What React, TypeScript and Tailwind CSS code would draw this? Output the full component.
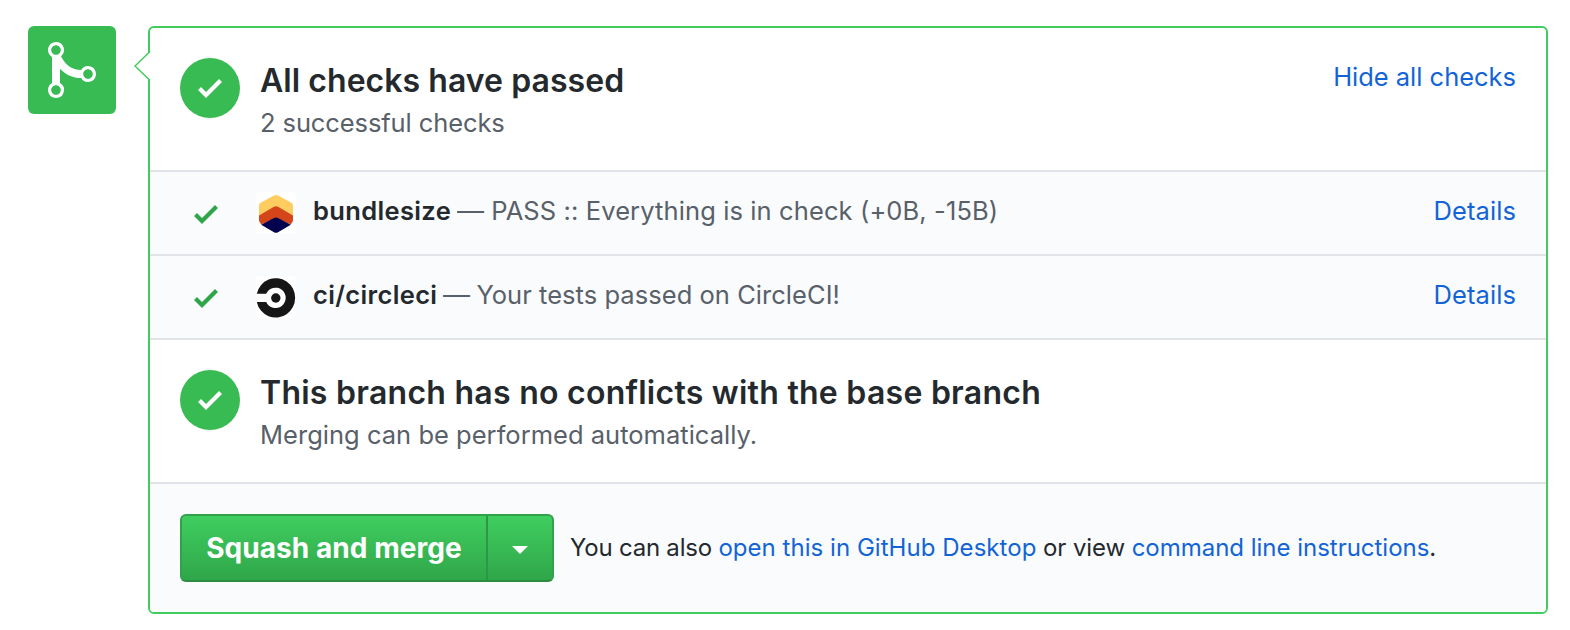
import React from "react";

const CHECK = "M12 5l-8 8-4-4 1.5-1.5L4 10l6.5-6.5z";
const MERGE =
  "M10 7c-.73 0-1.38.41-1.73 1.02V8C7.22 7.98 6 7.64 5.14 6.98c-.75-.58-1.5-1.61-1.89-2.44A1.993 1.993 0 0 0 2 .99C.89.99 0 1.89 0 3a2 2 0 0 0 1 1.72v6.56c-.59.35-1 .99-1 1.72 0 1.11.89 2 2 2a1.993 1.993 0 0 0 1-3.72V7.67c.67.7 1.44 1.27 2.3 1.69.86.42 2.03.63 2.97.64v-.02c.36.61 1 1.02 1.73 1.02 1.11 0 2-.89 2-2 0-1.11-.89-2-2-2zm-6.8 6c0 .66-.55 1.2-1.2 1.2-.65 0-1.2-.55-1.2-1.2 0-.65.55-1.2 1.2-1.2.65 0 1.2.55 1.2 1.2zM2 4.2C1.34 4.2.8 3.65.8 3c0-.65.55-1.2 1.2-1.2.65 0 1.2.55 1.2 1.2 0 .65-.55 1.2-1.2 1.2zm8 6c-.66 0-1.2-.55-1.2-1.2 0-.65.55-1.2 1.2-1.2.65 0 1.2.55 1.2 1.2 0 .65-.55 1.2-1.2 1.2z";

function CheckIcon({ className }: { className: string }) {
  return (
    <svg viewBox="0 0 12 16" className={`h-8 w-6 shrink-0 fill-current ${className}`}>
      <path d={CHECK} />
    </svg>
  );
}

function BundlesizeLogo() {
  return (
    <svg viewBox="0 0 40 42" className="h-[42px] w-10">
      <path d="M18 3.500q2-1 4 0L35 10.500q2 1.100 2 3.200V24L20 15 3 24V13.700q0-2.100 2-3.200z" fill="#ffcd5f" />
      <path d="M18 14.800q2-1.100 4 0L37 23.500v4.500q0 2-1.500 3.200L34.800 32.500 20 26 5.200 32.500 4.500 31.200Q3 30 3 28V23.500z" fill="#d4451a" />
      <path d="M18 26q2-1.100 4 0l12.800 6.800L22 40.200q-2 1-4 0L5.200 32.800z" fill="#03024f" />
    </svg>
  );
}

function CircleLogo() {
  return (
    <svg viewBox="0 0 40 42" className="h-[42px] w-10">
      <circle cx="19.800" cy="22" r="4.700" fill="#161616" />
      <path
        d="M.8 17.700A19.400 19.700 0 1 1 .8 26H10.200A10.200 10.200 0 1 0 10.200 17.700z"
        fill="#161616"
      />
    </svg>
  );
}

function Link({ children, className = "" }: { children: React.ReactNode; className?: string }) {
  return (
    <a href="#" className={`text-[#1264d6] ${className}`}>
      {children}
    </a>
  );
}

function StatusSection({
  title,
  titleClass,
  detail,
  detailClass,
  action,
}: {
  title: string;
  titleClass: string;
  detail: string;
  detailClass: string;
  action?: string;
}) {
  return (
    <section className="flex h-36 items-start border-b-2 border-[#e1e3e9] px-[30px]">
      <div className="mt-[30px] flex size-[60px] items-center justify-center rounded-full bg-[#39bb54]">
        <CheckIcon className="text-white" />
      </div>
      <div className="ml-5 mt-8 flex-1">
        <h2 className={`text-[32px] leading-[41px] font-semibold text-[#24292e] ${titleClass}`}>{title}</h2>
        <p className={`mt-px text-[25.5px] leading-[42px] text-[#586069] ${detailClass}`}>{detail}</p>
      </div>
      {action && <Link className="mt-7 text-[25.5px] leading-[42px] tracking-[-0.02px]">{action}</Link>}
    </section>
  );
}

function CheckRow({
  logo,
  name,
  message,
  messageClass,
}: {
  logo: React.ReactNode;
  name: string;
  message: string;
  messageClass: string;
}) {
  return (
    <li className="flex h-[84px] items-start border-b-2 border-[#e1e3e9] bg-[#fafbfd] pr-[30px] pl-11 text-[25.5px] leading-[42px]">
      <CheckIcon className="mt-[26px] text-[#2fa549]" />
      <div className="mt-5 ml-[38px] h-[42px] w-10 overflow-hidden rounded-[4px] bg-white">{logo}</div>
      <p className="mt-[18px] ml-[17px] flex flex-1 text-[#586069]">
        <strong className="font-semibold tracking-[0.36px] text-[#24292e]">{name}</strong>
        <span className="ml-[6px] w-[27px] origin-left scale-x-[1.06]">—</span>
        <span className={messageClass}>{message}</span>
      </p>
      <Link className="mt-[18px] tracking-[0.1px]">Details</Link>
    </li>
  );
}

export default function App() {
  return (
    <main className="flex h-[630px] w-[1570px] items-start bg-white pt-[26px] pl-7 font-['Inter',sans-serif]">
      <div className="flex size-[88px] items-center justify-center rounded-md bg-[#39bb54]">
        <svg viewBox="0 0 12 16" className="h-16 w-12 fill-white">
          <path d={MERGE} />
        </svg>
      </div>
      <div className="relative ml-8 h-[588px] w-[1400px] rounded-md border-2 border-[#40cc5e]">
        <svg viewBox="0 0 18 32" className="absolute top-[22px] -left-[17px] h-8 w-[18px]">
          <path d="M17 2L3 16l14 14z" fill="#fff" />
          <path d="M17 1.500L2 16 17 30.500" fill="none" stroke="#40cc5e" strokeWidth="1.400" />
        </svg>
        <StatusSection
          title="All checks have passed"
          titleClass="tracking-[0.05px]"
          detail="2 successful checks"
          detailClass="tracking-[-0.1px]"
          action="Hide all checks"
        />
        <ul>
          <CheckRow
            logo={<BundlesizeLogo />}
            name="bundlesize"
            message="PASS :: Everything is in check (+0B, -15B)"
            messageClass="ml-[7px] tracking-[0.11px]"
          />
          <CheckRow
            logo={<CircleLogo />}
            name="ci/circleci"
            message="Your tests passed on CircleCI!"
            messageClass="ml-[6px] tracking-[0.04px]"
          />
        </ul>
        <StatusSection
          title="This branch has no conflicts with the base branch"
          titleClass="tracking-[0.26px]"
          detail="Merging can be performed automatically."
          detailClass="tracking-[0.02px]"
        />
        <footer className="flex h-32 items-center rounded-b-[4px] bg-[#fafbfd] pl-[30px]">
          <div className="flex h-[68px] w-[374px] overflow-hidden rounded-md border-2 border-[#31a14b] border-b-[#2c8d42] bg-linear-to-b from-[#40cf60] to-[#2fa549] bg-origin-border">
            <button className="w-[304px] text-[28px] font-bold tracking-[0.05px] text-white">Squash and merge</button>
            <button className="flex flex-1 items-center justify-center border-l-2 border-[#2e9746]">
              <svg viewBox="0 0 16 8" className="mt-1 h-2 w-4 fill-white">
                <path d="M0 0h16L8 8z" />
              </svg>
            </button>
          </div>
          <p className="ml-4 text-[24px] leading-[42px] whitespace-nowrap text-[#24292e]">
            <span className="tracking-[-0.22px]">You can also </span>
            <Link className="tracking-[0.04px]">open this in GitHub Desktop</Link>
            <span className="tracking-[-0.1px]"> or view </span>
            <Link className="tracking-[-0.02px]">command line instructions</Link>.
          </p>
        </footer>
      </div>
    </main>
  );
}
